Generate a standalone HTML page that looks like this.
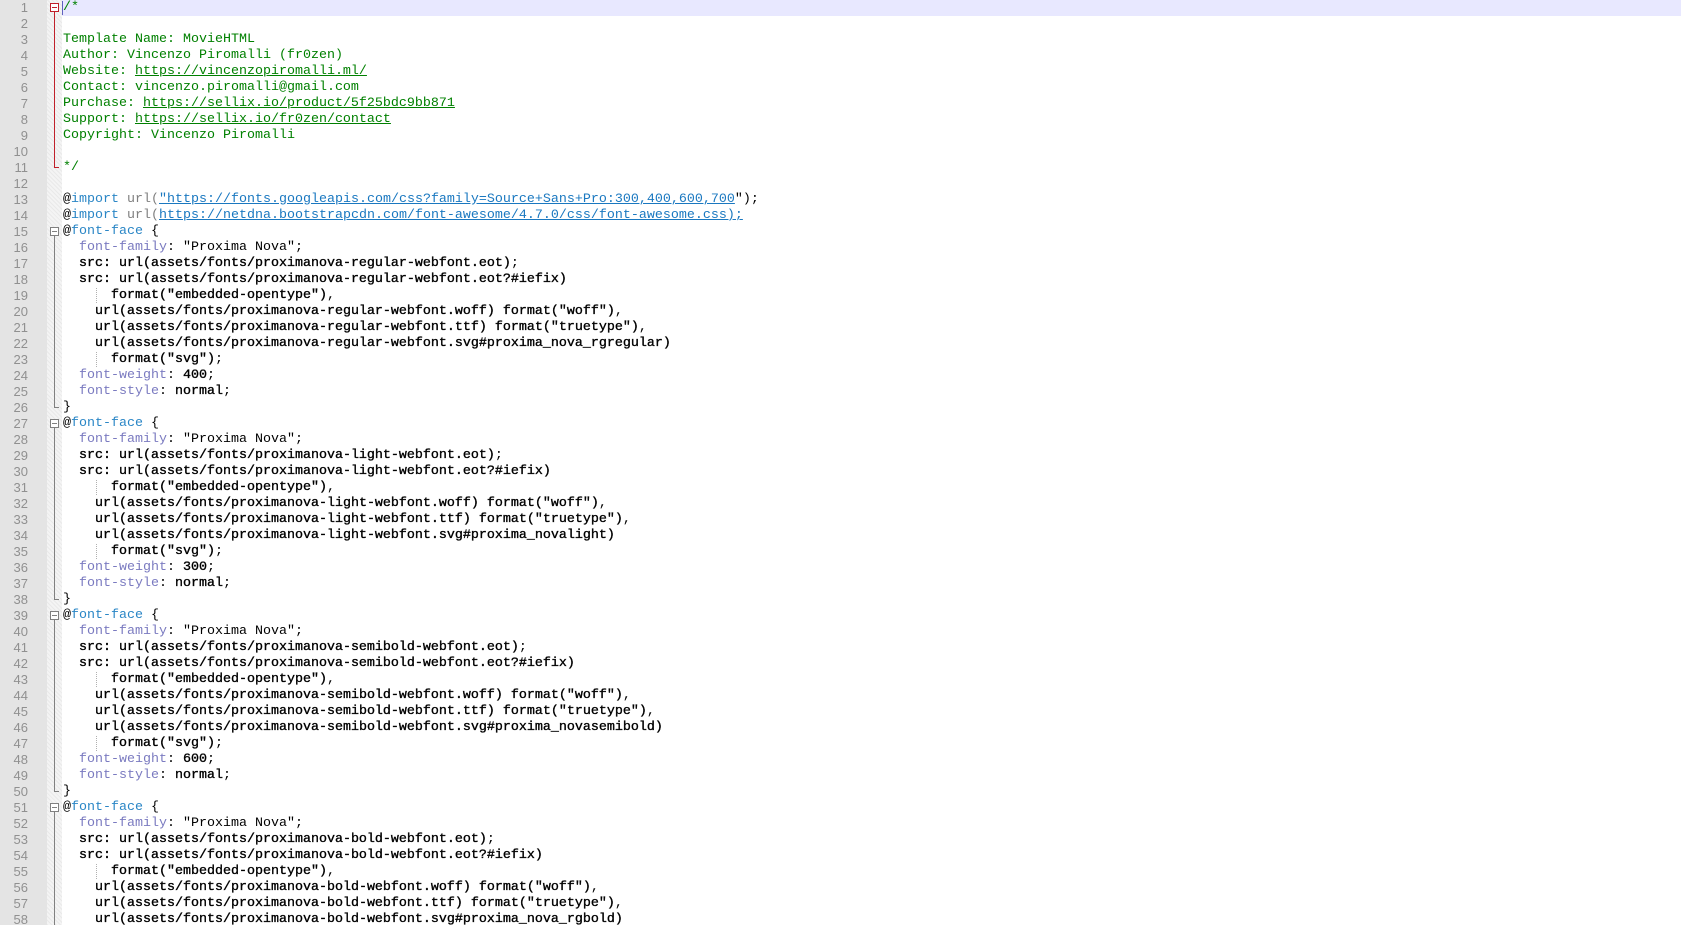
<!DOCTYPE html>
<html><head><meta charset="utf-8"><style>
html,body{margin:0;padding:0;background:#fff;width:1681px;height:925px;overflow:hidden;}
#g{position:absolute;left:0;top:0;width:47px;height:925px;background:#e4e4e4;}
#f{position:absolute;left:47px;top:0;width:15px;height:925px;background-color:#f4f4f4;background-image:repeating-linear-gradient(45deg,#e9e9e9 0 1px,transparent 1px 3px);}
#hl{position:absolute;left:62px;top:0;width:1619px;height:16px;background:#e8e8ff;}
.n{position:absolute;left:0;width:28px;text-align:right;font:13px "Liberation Sans",sans-serif;color:#909090;height:16px;line-height:16px;}
.l{position:absolute;left:63px;white-space:pre;font:13.33px/16px "Liberation Mono",monospace;height:16px;color:#000;}
.c{color:#008000}.c u{text-decoration:underline}
.k{color:#2a86c6}.p{color:#7a7ac0}.u{color:#808080}.a{color:#1a78c0;text-decoration:underline}
.v{color:#000;-webkit-text-stroke:0.35px #000}
.box{position:absolute;left:50px;width:7px;height:7px;border:1px solid #808080;background:#fff;}
.box:after{content:"";position:absolute;left:1px;top:3px;width:5px;height:1px;background:#808080;}
.box.r{border-color:#c0202a}.box.r:after{background:#c0202a}
.vl{position:absolute;left:54px;width:1px;background:#808080;}
.vl.r{background:#c0202a}
.end{position:absolute;left:54px;width:5px;height:1px;background:#808080;}
.end.r{background:#c0202a}
.ig{position:absolute;left:96px;width:1px;height:16px;background-image:repeating-linear-gradient(#b0b0b0 0 1px,transparent 1px 2px);}
.caret{position:absolute;left:62px;top:1px;width:1px;height:14px;background:#6060c0}
</style></head><body>
<div id="g"></div><div id="f"></div><div id="hl"></div>
<div class="caret"></div>

<div class="n" style="top:0">1</div><div class="n" style="top:16px">2</div><div class="n" style="top:32px">3</div><div class="n" style="top:48px">4</div><div class="n" style="top:64px">5</div><div class="n" style="top:80px">6</div><div class="n" style="top:96px">7</div><div class="n" style="top:112px">8</div><div class="n" style="top:128px">9</div><div class="n" style="top:144px">10</div><div class="n" style="top:160px">11</div><div class="n" style="top:176px">12</div><div class="n" style="top:192px">13</div><div class="n" style="top:208px">14</div><div class="n" style="top:224px">15</div><div class="n" style="top:240px">16</div><div class="n" style="top:256px">17</div><div class="n" style="top:272px">18</div><div class="n" style="top:288px">19</div><div class="n" style="top:304px">20</div><div class="n" style="top:320px">21</div><div class="n" style="top:336px">22</div><div class="n" style="top:352px">23</div><div class="n" style="top:368px">24</div><div class="n" style="top:384px">25</div><div class="n" style="top:400px">26</div><div class="n" style="top:416px">27</div><div class="n" style="top:432px">28</div><div class="n" style="top:448px">29</div><div class="n" style="top:464px">30</div><div class="n" style="top:480px">31</div><div class="n" style="top:496px">32</div><div class="n" style="top:512px">33</div><div class="n" style="top:528px">34</div><div class="n" style="top:544px">35</div><div class="n" style="top:560px">36</div><div class="n" style="top:576px">37</div><div class="n" style="top:592px">38</div><div class="n" style="top:608px">39</div><div class="n" style="top:624px">40</div><div class="n" style="top:640px">41</div><div class="n" style="top:656px">42</div><div class="n" style="top:672px">43</div><div class="n" style="top:688px">44</div><div class="n" style="top:704px">45</div><div class="n" style="top:720px">46</div><div class="n" style="top:736px">47</div><div class="n" style="top:752px">48</div><div class="n" style="top:768px">49</div><div class="n" style="top:784px">50</div><div class="n" style="top:800px">51</div><div class="n" style="top:816px">52</div><div class="n" style="top:832px">53</div><div class="n" style="top:848px">54</div><div class="n" style="top:864px">55</div><div class="n" style="top:880px">56</div><div class="n" style="top:896px">57</div><div class="n" style="top:912px">58</div>

<div class="box r" style="top:3px"></div><div class="vl r" style="top:12px;height:156px"></div><div class="end r" style="top:167px"></div>
<div class="box" style="top:227px"></div><div class="vl" style="top:236px;height:172px"></div><div class="end" style="top:407px"></div>
<div class="box" style="top:419px"></div><div class="vl" style="top:428px;height:172px"></div><div class="end" style="top:599px"></div>
<div class="box" style="top:611px"></div><div class="vl" style="top:620px;height:172px"></div><div class="end" style="top:791px"></div>
<div class="box" style="top:803px"></div><div class="vl" style="top:812px;height:113px"></div>
<div class="ig" style="top:288px"></div><div class="ig" style="top:352px"></div>
<div class="ig" style="top:480px"></div><div class="ig" style="top:544px"></div>
<div class="ig" style="top:672px"></div><div class="ig" style="top:736px"></div>
<div class="ig" style="top:864px"></div>

<div class="l c" style="top:0">/*</div>
<div class="l c" style="top:32px">Template Name: MovieHTML</div>
<div class="l c" style="top:48px">Author: Vincenzo Piromalli (fr0zen)</div>
<div class="l c" style="top:64px">Website: <u>https://vincenzopiromalli.ml/</u></div>
<div class="l c" style="top:80px">Contact: vincenzo.piromalli@gmail.com</div>
<div class="l c" style="top:96px">Purchase: <u>https://sellix.io/product/5f25bdc9bb871</u></div>
<div class="l c" style="top:112px">Support: <u>https://sellix.io/fr0zen/contact</u></div>
<div class="l c" style="top:128px">Copyright: Vincenzo Piromalli</div>
<div class="l c" style="top:160px">*/</div>
<div class="l" style="top:192px">@<span class="k">import</span> <span class="u">url(</span><span class="a">"https://fonts.googleapis.com/css?family=Source+Sans+Pro:300,400,600,700</span>");</div>
<div class="l" style="top:208px">@<span class="k">import</span> <span class="u">url(</span><span class="a">https://netdna.bootstrapcdn.com/font-awesome/4.7.0/css/font-awesome.css);</span></div>

<div class="l" style="top:224px">@<span class="k">font-face</span> {</div>
<div class="l" style="top:240px">  <span class="p">font-family</span>: "Proxima Nova";</div>
<div class="l" style="top:256px">  <span class="v">src: url(assets/fonts/proximanova-regular-webfont.eot)</span>;</div>
<div class="l" style="top:272px">  <span class="v">src: url(assets/fonts/proximanova-regular-webfont.eot?#iefix)</span></div>
<div class="l" style="top:288px">      <span class="v">format("embedded-opentype")</span>,</div>
<div class="l" style="top:304px">    <span class="v">url(assets/fonts/proximanova-regular-webfont.woff) format("woff")</span>,</div>
<div class="l" style="top:320px">    <span class="v">url(assets/fonts/proximanova-regular-webfont.ttf) format("truetype")</span>,</div>
<div class="l" style="top:336px">    <span class="v">url(assets/fonts/proximanova-regular-webfont.svg#proxima_nova_rgregular)</span></div>
<div class="l" style="top:352px">      <span class="v">format("svg")</span>;</div>
<div class="l" style="top:368px">  <span class="p">font-weight</span>: <span class="v">400</span>;</div>
<div class="l" style="top:384px">  <span class="p">font-style</span>: <span class="v">normal</span>;</div>
<div class="l" style="top:400px">}</div>

<div class="l" style="top:416px">@<span class="k">font-face</span> {</div>
<div class="l" style="top:432px">  <span class="p">font-family</span>: "Proxima Nova";</div>
<div class="l" style="top:448px">  <span class="v">src: url(assets/fonts/proximanova-light-webfont.eot)</span>;</div>
<div class="l" style="top:464px">  <span class="v">src: url(assets/fonts/proximanova-light-webfont.eot?#iefix)</span></div>
<div class="l" style="top:480px">      <span class="v">format("embedded-opentype")</span>,</div>
<div class="l" style="top:496px">    <span class="v">url(assets/fonts/proximanova-light-webfont.woff) format("woff")</span>,</div>
<div class="l" style="top:512px">    <span class="v">url(assets/fonts/proximanova-light-webfont.ttf) format("truetype")</span>,</div>
<div class="l" style="top:528px">    <span class="v">url(assets/fonts/proximanova-light-webfont.svg#proxima_novalight)</span></div>
<div class="l" style="top:544px">      <span class="v">format("svg")</span>;</div>
<div class="l" style="top:560px">  <span class="p">font-weight</span>: <span class="v">300</span>;</div>
<div class="l" style="top:576px">  <span class="p">font-style</span>: <span class="v">normal</span>;</div>
<div class="l" style="top:592px">}</div>

<div class="l" style="top:608px">@<span class="k">font-face</span> {</div>
<div class="l" style="top:624px">  <span class="p">font-family</span>: "Proxima Nova";</div>
<div class="l" style="top:640px">  <span class="v">src: url(assets/fonts/proximanova-semibold-webfont.eot)</span>;</div>
<div class="l" style="top:656px">  <span class="v">src: url(assets/fonts/proximanova-semibold-webfont.eot?#iefix)</span></div>
<div class="l" style="top:672px">      <span class="v">format("embedded-opentype")</span>,</div>
<div class="l" style="top:688px">    <span class="v">url(assets/fonts/proximanova-semibold-webfont.woff) format("woff")</span>,</div>
<div class="l" style="top:704px">    <span class="v">url(assets/fonts/proximanova-semibold-webfont.ttf) format("truetype")</span>,</div>
<div class="l" style="top:720px">    <span class="v">url(assets/fonts/proximanova-semibold-webfont.svg#proxima_novasemibold)</span></div>
<div class="l" style="top:736px">      <span class="v">format("svg")</span>;</div>
<div class="l" style="top:752px">  <span class="p">font-weight</span>: <span class="v">600</span>;</div>
<div class="l" style="top:768px">  <span class="p">font-style</span>: <span class="v">normal</span>;</div>
<div class="l" style="top:784px">}</div>

<div class="l" style="top:800px">@<span class="k">font-face</span> {</div>
<div class="l" style="top:816px">  <span class="p">font-family</span>: "Proxima Nova";</div>
<div class="l" style="top:832px">  <span class="v">src: url(assets/fonts/proximanova-bold-webfont.eot)</span>;</div>
<div class="l" style="top:848px">  <span class="v">src: url(assets/fonts/proximanova-bold-webfont.eot?#iefix)</span></div>
<div class="l" style="top:864px">      <span class="v">format("embedded-opentype")</span>,</div>
<div class="l" style="top:880px">    <span class="v">url(assets/fonts/proximanova-bold-webfont.woff) format("woff")</span>,</div>
<div class="l" style="top:896px">    <span class="v">url(assets/fonts/proximanova-bold-webfont.ttf) format("truetype")</span>,</div>
<div class="l" style="top:912px">    <span class="v">url(assets/fonts/proximanova-bold-webfont.svg#proxima_nova_rgbold)</span></div>
</body></html>
